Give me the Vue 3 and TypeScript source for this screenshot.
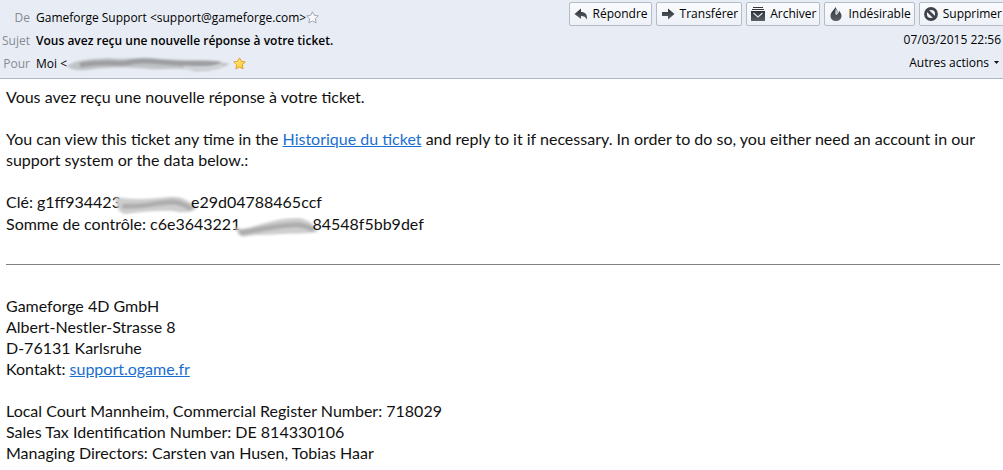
<script setup lang="ts">
interface Action {
  id: string
  label: string
}

const actions: Action[] = [
  { id: 'reply', label: 'Répondre' },
  { id: 'forward', label: 'Transférer' },
  { id: 'archive', label: 'Archiver' },
  { id: 'junk', label: 'Indésirable' },
  { id: 'delete', label: 'Supprimer' },
]

const starPath = 'M6.5 .8 L8.300 4.300 L12.300 4.900 L9.400 7.700 L10.100 11.900 L6.500 10 L2.900 11.900 L3.600 7.700 L.7 4.900 L4.700 4.300 Z'
</script>

<template>
  <main class="message">
    <svg class="defs" width="0" height="0" aria-hidden="true">
      <defs>
        <linearGradient id="ink" x1="0" y1="0" x2="0" y2="1">
          <stop offset="0" stop-color="#2c3036" />
          <stop offset="1" stop-color="#5b6168" />
        </linearGradient>
        <linearGradient id="gold" x1="0" y1="0" x2="1" y2="1">
          <stop offset="0" stop-color="#fff3a0" />
          <stop offset="1" stop-color="#ffc40c" />
        </linearGradient>
        <filter id="soft" x="-10%" y="-50%" width="120%" height="200%">
          <feGaussianBlur stdDeviation="1.3" />
        </filter>
      </defs>
    </svg>

    <header class="head">
      <dl class="fields">
        <dt>De</dt>
        <dd>
          Gameforge Support &lt;support@gameforge.com&gt;<button class="star" type="button" aria-label="Ajouter au carnet">
            <svg width="13" height="13" viewBox="0 0 13 13"><path :d="starPath" fill="#f7f9fc" stroke="#a3a8ae" stroke-linejoin="round" /></svg>
          </button>
        </dd>
        <dt>Sujet</dt>
        <dd class="subject">Vous avez reçu une nouvelle réponse à votre ticket.</dd>
        <dt>Pour</dt>
        <dd>
          Moi &lt;<svg class="smudge-to" width="165" height="18" viewBox="0 0 165 18" aria-hidden="true">
            <g filter="url(#soft)">
              <path d="M1 11 C10 5 22 4 42 3 C58 5 70 2 86 3 C104 5 118 5 138 5 C150 5 157 8 164 9 C154 14 142 17 128 16 C114 12 100 15 84 14 C64 12 45 12 28 14 C16 16 6 16 1 11Z" fill="#c0c3c6" />
              <path d="M14 10 C34 6 46 9 60 8 C76 4 90 7 108 8 C124 9 140 8 154 9" fill="none" stroke="#9c9ea1" stroke-width="5" />
              <path d="M118 12 C134 15 146 13 156 10" fill="none" stroke="#d3d6d9" stroke-width="3" />
            </g>
          </svg><button class="star" type="button" aria-label="Modifier le contact">
            <svg width="13" height="13" viewBox="0 0 13 13"><path :d="starPath" fill="url(#gold)" stroke="#e3a02c" stroke-linejoin="round" /></svg>
          </button>
        </dd>
      </dl>

      <div class="side">
        <div class="toolbar">
          <button v-for="a in actions" :key="a.id" class="action" type="button">
            <svg width="16" height="16" viewBox="0 0 16 16" aria-hidden="true">
              <path v-if="a.id === 'reply'" d="M1.500 8 L8 2.500 V6 C12 6 14.500 8 14 13.500 C12.500 11 11 10 8 10 V13 Z" fill="url(#ink)" />
              <path v-else-if="a.id === 'forward'" d="M2 6 H8 V2.500 L14.500 8 L8 13.500 V10 H2 Z" fill="url(#ink)" />
              <g v-else-if="a.id === 'archive'">
                <path d="M3 1.500 H13 M2 3.500 H14" stroke="#33373c" />
                <rect x="1" y="5" width="14" height="10" fill="url(#ink)" />
                <path d="M3.500 7 L8 11 L12.500 7" fill="none" stroke="#dfe4ea" stroke-width="1.200" />
              </g>
              <g v-else-if="a.id === 'junk'">
                <path d="M7.500 1 C6 4.500 2.500 6 2.500 10 C2.500 13 5 15 8 15 C11 15 13.500 13 13.500 10 C13.500 7.500 12 6 11 4.500 C11 6 10.500 7 10 7.500 C10 5 8.500 3.500 7.500 1 Z" fill="url(#ink)" />
                <path d="M7.500 2.500 C8 5 6.500 6.500 7.500 8.500 C8.500 9.500 10 8.500 10 7 C9.800 5 8.300 4 7.500 2.500 Z" fill="#c3c9d0" />
              </g>
              <g v-else fill="none" stroke="#3f4349" stroke-width="2.800">
                <circle cx="8" cy="8" r="5.500" />
                <path d="M4 4 L12 12" />
              </g>
            </svg>
            <span>{{ a.label }}</span>
          </button>
        </div>
        <time class="date" datetime="2015-03-07T22:56">07/03/2015 22:56</time>
        <button class="more" type="button">
          Autres actions
          <svg width="5" height="3" viewBox="0 0 5 3" aria-hidden="true"><path d="M0 0 H5 L2.500 3 Z" fill="#111" /></svg>
        </button>
      </div>
    </header>

    <article class="body">
      <p>Vous avez reçu une nouvelle réponse à votre ticket.</p>
      <p>
        You can view this ticket any time in the <a href="#historique">Historique du ticket</a> and reply to it if
        necessary. In order to do so, you either need an account in our support system or the data below.:
      </p>
      <p>
        Clé: g1ff934423<svg class="smudge" width="84" height="22" viewBox="0 0 82 22" preserveAspectRatio="none" aria-hidden="true">
          <g filter="url(#soft)">
            <path d="M1 2 C18 5 36 4 54 2 C66 1 74 6 81 13 C76 18 66 18 58 16 C42 15 26 17 12 19 C4 19 3 12 1 2Z" fill="#cecece" />
            <path d="M8 11 C24 13 40 8 56 7 C66 7 70 11 76 14" fill="none" stroke="#adadad" stroke-width="5" />
          </g>
        </svg>e29d04788465ccf<br />
        Somme de contrôle: c6e3643221<svg class="smudge" width="86" height="22" viewBox="0 0 82 22" preserveAspectRatio="none" aria-hidden="true">
          <g filter="url(#soft)">
            <path d="M1 9 C8 14 14 11 24 8 C38 4 46 1 62 1 C72 2 78 8 81 15 C70 17 58 16 46 17 C34 18 20 17 10 20 C6 18 3 14 1 9Z" fill="#cecece" />
            <path d="M6 16 C24 13 40 9 56 8 C66 7 72 10 77 13" fill="none" stroke="#adadad" stroke-width="5" />
          </g>
        </svg>84548f5bb9def
      </p>
      <hr />
      <address>
        Gameforge 4D GmbH<br />
        Albert-Nestler-Strasse 8<br />
        D-76131 Karlsruhe<br />
        Kontakt: <a href="#support">support.ogame.fr</a>
      </address>
      <p>
        Local Court Mannheim, Commercial Register Number: 718029<br />
        Sales Tax Identification Number: DE 814330106<br />
        Managing Directors: Carsten van Husen, Tobias Haar
      </p>
    </article>
  </main>
</template>

<style>
body {
  background: #fff;
}
</style>

<style scoped>
.message {
  overflow: hidden;
  color: #111;
}
.defs {
  position: absolute;
}
.head {
  display: flex;
  justify-content: space-between;
  background: #e8edf5;
  border-bottom: 1px solid #a9b7c9;
  font: 12px/23px "Open Sans", "Noto Sans", sans-serif;
  color: #000;
  white-space: nowrap;
}
.fields {
  display: grid;
  grid-template-columns: 30px 1fr;
  grid-auto-rows: 23px;
  column-gap: 6px;
  margin: 0;
  padding: 6px 0 3px;
}
dt {
  text-align: right;
  color: #868b92;
}
dd {
  display: flex;
  align-items: center;
  margin: 0;
}
.subject {
  font-weight: 600;
}
button {
  font: inherit;
  color: inherit;
  cursor: pointer;
}
.star {
  display: flex;
  padding: 0;
  border: 0;
  background: none;
}
.smudge-to {
  margin: 0 2px 0 -1px;
}
.side {
  display: flex;
  flex-direction: column;
  align-items: flex-end;
}
.toolbar {
  display: flex;
  gap: 4px;
  height: 24px;
  margin: 2px -3px 2px 0;
}
.action {
  display: flex;
  align-items: center;
  gap: 4px;
  padding: 0 3px;
  border: 1px solid #b4bcc8;
  border-radius: 2px;
  background: linear-gradient(#fafbfd, #edf1f7);
  line-height: 20px;
}
.date {
  padding-right: 2px;
}
.more {
  display: flex;
  align-items: center;
  gap: 5px;
  padding: 0 4px 0 0;
  border: 0;
  background: none;
  line-height: 23px;
}
.body {
  padding: 7px 3px 9px 6px;
  font: 16px/21px Lato, "Open Sans", sans-serif;
}
p {
  margin: 0 0 21px;
}
p:last-child {
  margin: 0;
}
address {
  margin-bottom: 21px;
  font-style: normal;
}
a {
  color: #1a6fd0;
}
hr {
  margin: 29px 0 30px;
  border: 0;
  border-top: 1px solid #808080;
}
.smudge {
  margin: -4px -7px;
  vertical-align: -5px;
}
</style>
